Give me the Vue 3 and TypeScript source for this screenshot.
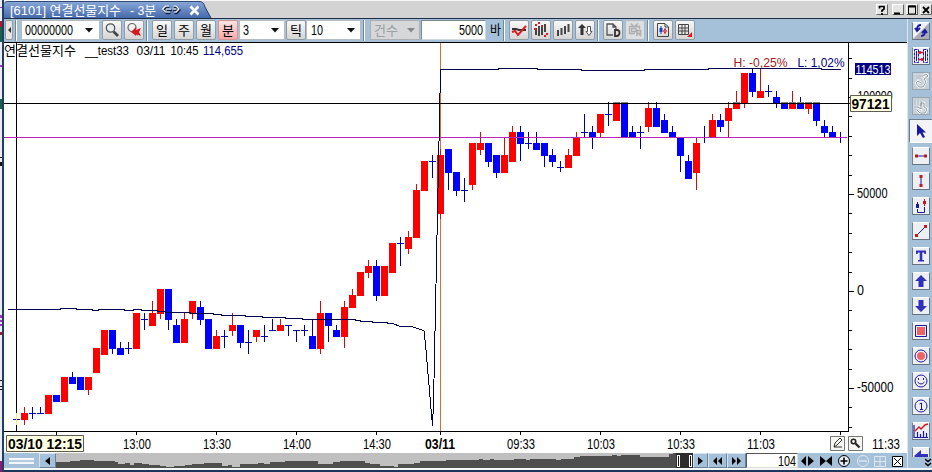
<script setup lang="ts">
import { h, type FunctionalComponent } from 'vue'

type Kind = 'r' | 'b' | 'c'
// kind, high, body top, body bottom, low; the first candle sits at x = 16
type Candle = [Kind, number, number, number, number]

const candles: Candle[] = [
  ['c', 413, 419, 419, 425], ['r', 407, 413, 420, 425], ['c', 407, 413, 413, 419], ['c', 407, 413, 413, 414],
  ['r', 395, 395, 414, 414], ['b', 395, 395, 402, 402], ['r', 377, 377, 402, 402], ['b', 372, 377, 384, 384],
  ['b', 377, 377, 390, 390], ['r', 377, 377, 390, 395], ['r', 348, 348, 373, 373], ['r', 330, 330, 355, 355],
  ['b', 330, 330, 349, 354], ['b', 342, 348, 355, 355], ['c', 342, 348, 348, 354], ['r', 313, 313, 349, 349],
  ['c', 313, 319, 319, 330], ['r', 301, 313, 326, 326], ['r', 289, 289, 314, 319], ['b', 289, 289, 320, 330],
  ['b', 319, 325, 343, 343], ['r', 313, 319, 343, 343], ['r', 301, 301, 314, 319], ['b', 301, 307, 320, 325],
  ['b', 319, 319, 349, 349], ['r', 330, 336, 349, 349], ['c', 330, 336, 336, 348], ['r', 313, 325, 331, 336],
  ['b', 325, 325, 343, 348], ['c', 330, 342, 342, 354], ['r', 330, 330, 337, 342], ['c', 325, 336, 336, 342],
  ['c', 319, 330, 330, 331], ['r', 319, 325, 331, 331], ['c', 325, 325, 325, 336], ['c', 330, 330, 330, 342],
  ['c', 325, 330, 330, 336], ['b', 319, 336, 349, 349], ['r', 301, 313, 349, 354], ['b', 313, 313, 326, 342],
  ['b', 325, 330, 337, 337], ['r', 301, 307, 337, 348], ['r', 289, 295, 308, 308], ['r', 272, 272, 296, 296],
  ['r', 260, 266, 273, 278], ['b', 260, 266, 296, 301], ['r', 266, 266, 296, 296], ['r', 243, 243, 273, 273],
  ['c', 237, 243, 243, 266], ['r', 231, 237, 249, 254], ['r', 184, 190, 238, 238], ['r', 161, 161, 191, 191],
  ['c', 155, 161, 161, 178], ['r', 149, 155, 214, 219], ['b', 149, 149, 173, 190], ['b', 172, 172, 191, 196],
  ['c', 178, 190, 190, 202], ['r', 143, 143, 185, 190], ['r', 132, 143, 150, 155], ['b', 143, 143, 162, 167],
  ['b', 155, 155, 173, 178], ['r', 138, 155, 173, 173], ['r', 126, 132, 162, 162], ['b', 126, 132, 144, 161],
  ['c', 132, 143, 143, 149], ['b', 132, 143, 150, 150], ['b', 143, 143, 156, 167], ['b', 149, 155, 162, 167],
  ['c', 161, 167, 167, 172], ['r', 149, 155, 168, 168], ['r', 132, 138, 156, 156], ['c', 114, 132, 132, 137],
  ['b', 126, 132, 138, 149], ['r', 114, 114, 133, 137], ['c', 102, 114, 114, 126], ['r', 102, 102, 121, 121],
  ['b', 102, 102, 137, 137], ['b', 126, 132, 137, 137], ['c', 126, 132, 132, 149], ['r', 102, 108, 127, 132],
  ['b', 102, 108, 127, 127], ['b', 114, 120, 133, 133], ['b', 126, 132, 137, 137], ['b', 138, 138, 156, 172],
  ['b', 155, 161, 179, 179], ['r', 138, 143, 173, 190], ['c', 126, 137, 137, 143], ['r', 114, 120, 137, 137],
  ['b', 114, 120, 127, 132], ['r', 102, 108, 121, 137], ['r', 91, 102, 109, 109], ['r', 73, 73, 103, 108],
  ['b', 68, 73, 92, 97], ['r', 68, 91, 98, 98], ['c', 85, 91, 91, 97], ['b', 91, 97, 104, 108],
  ['b', 102, 102, 109, 109], ['r', 91, 102, 109, 109], ['b', 97, 102, 109, 109], ['r', 102, 102, 109, 114],
  ['b', 102, 102, 121, 126], ['b', 120, 126, 133, 137], ['b', 126, 132, 138, 138], ['c', 132, 137, 137, 143],
]
const cx = (i: number) => 16 + i * 8

const timeTicks = [56, 136, 216, 296, 376, 440, 520, 600, 680, 760, 840]
const timeLabels: [number, string][] = [
  [123, '13:00'], [203, '13:30'], [283, '14:00'], [363, '14:30'],
  [507, '09:33'], [587, '10:03'], [667, '10:33'], [747, '11:03'], [872, '11:33'],
]
const priceTicks = [58, 78, 116, 136, 155, 175, 213, 233, 252, 272, 310, 330, 349, 369, 407, 427]
const majorTicks = [97, 194, 291, 388]

const FONT = "'Liberation Sans','Noto Sans CJK KR',sans-serif"

interface LabelProps { text: string; w: number; size?: number; color?: string; bold?: boolean }
const Label: FunctionalComponent<LabelProps> = (p) =>
  h('svg', { width: p.w, height: 16, viewBox: `0 0 ${p.w} 16`, overflow: 'visible' }, [
    h('text', {
      x: 0, y: 13, textLength: p.w, lengthAdjust: 'spacingAndGlyphs', fill: p.color ?? '#000',
      'font-size': p.size ?? 14, 'font-weight': p.bold ? 700 : 400, 'font-family': FONT,
    }, p.text),
  ])
Label.props = ['text', 'w', 'size', 'color', 'bold']

const periods = ['일', '주', '월', '분']
const tools = ['refresh', 'link', 'hand', 'grab', 'pointer', 'hline', 'vline', 'candle', 'trend', 'text', 'up', 'down', 'rect', 'circle', 'smile', 'one', 'stats', 'back']
</script>

<template>
  <div class="screen">
    <svg class="edge" width="4" height="472">
      <path d="M0 0H2V472H0z" fill="#e9edf2" />
      <path d="M0 21H2V27H0z" fill="#a51a2c" /><path d="M0 27H2V42H0zM0 99H2V109H0z" fill="#176247" />
      <path d="M0 7H2V8H0zM0 65H2V67H0zM0 315H2V318H0zM0 320H2V322H0zM0 324H2V326H0z" fill="#a832c0" />
      <path d="M0 332H2V335H0z" fill="#9d1d2e" />
      <path d="M0 157H2V158H0zM0 162H2V166H0zM0 380H2V381H0zM0 386H2V387H0zM0 389H2V390H0z" fill="#111" />
      <path d="M0 461H2V472H0z" fill="#8a1c72" />
      <path d="M2 0H4V472H2z" fill="#1d3f68" />
    </svg>
    <div class="window">
      <header class="titlebar">
        <div class="tab">
          <Label text="[6101] 연결선물지수" :w="111" :size="13" color="#fff" />
          <Label class="tab-period" text="- 3분" :w="26" :size="13" color="#fff" />
          <svg class="chain" width="19" height="12" viewBox="0 0 19 12" fill="none">
            <path d="M7.500 3.500H4.500L1.500 6L4.500 9.500H8.500M5 6.500H10M12 3.500H15L18 6L15 9.500H12.500M11 6.500H15" stroke="#14223c" stroke-width="1.500" />
            <path d="M7 2H3.500L0.500 5L3.500 8H8M4 5H9M11.500 2H14L17 5L14 8H12M10.500 5H14" stroke="#f3f3ea" stroke-width="1.200" />
          </svg>
          <svg class="close" width="11" height="11" viewBox="0 0 11 11"><path d="M1.500 1.500L9.500 9.500M9.500 1.500L1.500 9.500" stroke="#fff" stroke-width="2.600" /></svg>
        </div>
        <svg class="tab-slope" width="13" height="17" viewBox="0 0 13 17">
          <defs><linearGradient id="slope" x2="0" y2="1"><stop stop-color="#86a6d8" /><stop offset="1" stop-color="#456aab" /></linearGradient></defs>
          <path d="M0 0C4 0 5 3 6 6L12 17H0z" fill="url(#slope)" /><path d="M0 .5C4 .5 5 3 6 6L12 17" fill="none" stroke="#243c62" />
        </svg>
        <div class="winbtns">
          <i class="help"><svg width="12" height="12"><path d="M3.500 4.500V2.500H8V5L6 6.500V8M6 9V11" fill="none" stroke="#000" stroke-width="1.700" /></svg></i>
          <i><svg width="12" height="12"><path d="M2 9.500H8" stroke="#000" stroke-width="2" /></svg></i>
          <i><svg width="12" height="12"><path d="M2.500 2H9.500V10H2.500z" fill="none" stroke="#000" /><path d="M2 2.500H10" stroke="#000" stroke-width="2" /></svg></i>
          <i><svg width="12" height="12"><path d="M3 3L9 9M9 3L3 9" stroke="#000" stroke-width="1.800" /></svg></i>
        </div>
      </header>

      <div class="body">
        <main class="main">
          <div class="toolbar">
            <button class="mini"><svg width="5" height="8"><path d="M4 1V7L1 4z" fill="#333" /></svg></button>
            <span class="sep first" />
            <div class="field code"><Label text="00000000" :w="48" /><svg class="arrow" width="8" height="5"><path d="M0 0H8L4 4.500z" fill="#111" /></svg></div>
            <button class="btn search">
              <svg width="18" height="18" viewBox="0 0 18 18"><path d="M10.500 10.500L15 15" stroke="#444" stroke-width="2.600" /><circle cx="7.500" cy="7" r="4.200" fill="#e9f0f2" stroke="#555" stroke-width="1.300" /></svg>
            </button>
            <button class="btn search2">
              <svg width="18" height="18" viewBox="0 0 18 18"><path d="M9.500 10L13 14" stroke="#666" stroke-width="2" /><circle cx="7" cy="6.500" r="4" fill="#eef2f3" stroke="#666" stroke-width="1.200" /><path d="M6 11L11 6V9L16 7L14 11L16 15L11 13V15z" fill="#df161f" /></svg>
            </button>
            <span class="sep s1" />
            <div class="periods">
              <button v-for="p in periods" :key="p" class="btn" :class="{ active: p === '분' }"><Label :text="p" :w="12" :size="13" /></button>
            </div>
            <div class="field num"><Label text="3" :w="6" /><svg class="arrow" width="8" height="5"><path d="M0 0H8L4 4.500z" fill="#111" /></svg></div>
            <button class="btn tick"><Label text="틱" :w="12" :size="13" /></button>
            <div class="field ten"><Label text="10" :w="12" /><svg class="arrow" width="8" height="5"><path d="M0 0H8L4 4.500z" fill="#111" /></svg></div>
            <span class="sep s2" />
            <div class="field count"><Label text="건수" :w="24" :size="13" color="#9b9ea2" /><svg class="arrow" width="8" height="5"><path d="M0 0H8L4 4.500z" fill="#85888c" /></svg></div>
            <div class="field bars"><Label text="5000" :w="24" /></div>
            <Label class="unit" text="바" :w="11" :size="13" />
            <span class="sep s3" />
            <div class="group">
              <button class="btn"><svg width="18" height="18"><path d="M2 8H6L9 9H16" fill="none" stroke="#333" stroke-width="2" /><path d="M2 11L5 10L8 14L16 5" fill="none" stroke="#dc1c24" stroke-width="2" /></svg></button>
              <button class="btn"><svg width="18" height="18"><path d="M4 7V14M7 5V15M10 6V14M13 3V11" stroke="#444" stroke-width="2" /><path d="M3 4H5M6 2H8M11 5H9M2 8H4M14 13H16M12 15H14" stroke="#df1b24" stroke-width="2" /></svg></button>
              <button class="btn"><svg width="18" height="18"><path d="M4 9V15M7.500 7V14M11 5V13M14.500 3V11" stroke="#444" stroke-width="2" /></svg></button>
              <button class="btn"><svg width="18" height="18"><path d="M2 7L6 3L10 7H7.500V14H4.500V7z" fill="#333" /><path d="M11.500 5.500H14.500V10.500H16L13 14.500L10 10.500H11.500z" fill="#fff" stroke="#555" /></svg></button>
            </div>
            <span class="sep s4" />
            <div class="group">
              <button class="btn"><svg width="18" height="18" fill="none" stroke="#555" stroke-width="1.300"><path d="M9 14H3V3H9L12 6V8M9 3V6H12" /><path d="M11 9H13Q15.500 9 15.500 11.800T13 15H11z" stroke="#333" stroke-width="1.800" /></svg></button>
              <button class="btn off"><svg width="18" height="18" fill="none" stroke="#adadad" stroke-width="1.300"><path d="M3.500 5.500H13.500V8M3.500 5.500V12.500H9M5.500 7.500H10V10.500H5.500zM7 5L5 2.500M9 5L12 2.500" /><path d="M11 15V9.500H14.500V12.500H11M13 12.500L15 15" stroke-width="1.600" /></svg></button>
            </div>
            <span class="sep s5" />
            <div class="group">
              <button class="btn"><svg width="18" height="18" fill="none"><path d="M3.500 2.500H11L14.500 6V15.500H3.500zM11 3V6H14" stroke="#444" /><path d="M7 5V13" stroke="#1644c0" /><path d="M5.500 7H8.500V11H5.500z" fill="#1644c0" /><path d="M11 7V13M9.500 10L11 8L12.500 10L11 12z" stroke="#dd202a" /></svg></button>
              <button class="btn"><svg width="18" height="18"><path d="M2.500 3.500H12.500V13.500H2.500zM2.500 7H12.500M2.500 10H12.500M6 3.500V13.500M9 3.500V13.500" fill="none" stroke="#444" /><path d="M16 11V16H11z" fill="#e5141f" /></svg></button>
            </div>
          </div>

          <svg class="chart" width="903" height="410" viewBox="4 43 903 410" :font-family="FONT">
            <path d="M4 43H907V453H4z" fill="#fff" />
            <g shape-rendering="crispEdges">
              <path d="M440 43H441V431H440z" fill="#cf7530" />
              <g v-for="(c, i) in candles" :key="i">
                <rect :x="cx(i)" :y="c[1]" width="1" :height="c[4] - c[1]" :fill="c[0] === 'r' ? '#c01414' : '#00009a'" />
                <rect v-if="c[0] === 'c'" :x="cx(i) - 3" :y="c[2]" width="7" height="1" fill="#0000b0" />
                <rect v-else :x="cx(i) - 3" :y="c[2]" width="7" :height="c[3] - c[2]" :fill="c[0] === 'r' ? '#fe0000' : '#0000fe'" />
                <rect v-if="c[2] === 102" :x="cx(i) - 3" y="102" width="7" height="1" fill="#858585" />
              </g>
              <path d="M16 43H17V431H16zM4 103H854V104H4zM848 43H849V432H848zM4 431H849V432H4z" fill="#000" />
              <path d="M16 413H17V425H16z" fill="#f6ee5e" />
              <rect x="4" y="137" width="843" height="1" fill="#bc22bc" />
              <rect v-for="t in timeTicks" :key="t" :x="t" y="432" width="1" height="3" />
              <rect v-for="t in priceTicks" :key="t" x="849" :y="t" width="3" height="1" />
              <rect v-for="t in majorTicks" :key="t" x="849" :y="t" width="5" height="1" />
              <path d="M8 309.500H60V308.500H76V309.500H92V310.500H98V309.500H124V310.500H133V309.500H141V310.500H157V311.500H165V312.500H190V313.500H213V314.500H221V315.500H245V316.500H262V317.500H285V318.500H302V319.500H355V320.500H360V321.500H372V322.500H387V323.500H393L400 326.500H411L424 330.500L426 350L432.500 426L433.500 403L436.500 260L440.500 70.500V69.500H498V68.500H537V69.500H581V70.500H644V69.500H708V68.500H821V69.500H841" fill="none" stroke="#00004e" />
            </g>
            <text x="4" y="55" font-size="13" textLength="72" lengthAdjust="spacingAndGlyphs">연결선물지수</text>
            <text x="85" y="54.500" font-size="13" textLength="44" lengthAdjust="spacingAndGlyphs">__test33</text>
            <text x="136.500" y="54.500" font-size="13" textLength="29" lengthAdjust="spacingAndGlyphs">03/11</text>
            <text x="170.500" y="54.500" font-size="13" textLength="28" lengthAdjust="spacingAndGlyphs">10:45</text>
            <text x="203" y="54.500" font-size="13" textLength="40" lengthAdjust="spacingAndGlyphs" fill="#000080">114,655</text>
            <text x="733.500" y="67" font-size="13" textLength="54" lengthAdjust="spacingAndGlyphs" fill="#a32020">H: -0,25%</text>
            <text x="797.500" y="67" font-size="13" textLength="47" lengthAdjust="spacingAndGlyphs" fill="#000080">L: 1,02%</text>
            <path d="M855 63H891V75H855z" fill="#000080" />
            <text x="855.500" y="74" font-size="13.500" textLength="35" lengthAdjust="spacingAndGlyphs" fill="#fff">114513</text>
            <g font-size="14">
              <text x="857.500" y="101" textLength="35" lengthAdjust="spacingAndGlyphs">100000</text>
              <text x="857" y="198" textLength="30.500" lengthAdjust="spacingAndGlyphs">50000</text>
              <text x="857" y="295" textLength="7" lengthAdjust="spacingAndGlyphs">0</text>
              <text x="857" y="392" textLength="36.500" lengthAdjust="spacingAndGlyphs">-50000</text>
              <text v-for="t in timeLabels" :key="t[1]" :x="t[0]" y="449" textLength="28" lengthAdjust="spacingAndGlyphs">{{ t[1] }}</text>
              <text x="425" y="449" font-weight="700" textLength="30" lengthAdjust="spacingAndGlyphs">03/11</text>
            </g>
            <g fill="#ffffe4" stroke="#5d5d50">
              <path d="M850.500 95.500H891.500V111.500H850.500z" /><path d="M6.500 435.500H83.500V451.500H6.500z" />
            </g>
            <text x="851.500" y="109" font-size="14" font-weight="700" textLength="38" lengthAdjust="spacingAndGlyphs">97121</text>
            <text x="8" y="449" font-size="14" font-weight="700" textLength="74" lengthAdjust="spacingAndGlyphs">03/10 12:15</text>
            <g fill="#f6f6f2" stroke="#777"><path d="M830.500 436.500H844.500V450.500H830.500zM848.500 436.500H862.500V450.500H848.500z" /></g>
            <path d="M834 447L835 443L840 438L842 440L837 445L834 447H842" fill="none" stroke="#333" />
            <circle cx="853.500" cy="441.500" r="2.200" fill="none" stroke="#222" stroke-width="1.600" /><path d="M855.500 443.500L859.500 447.500" stroke="#222" stroke-width="2.200" />
          </svg>

          <footer class="nav">
            <div class="grip"><i /></div>
            <button class="navbtn prev"><svg width="6" height="8"><path d="M5 0V8L0 4z" /></svg></button>
            <svg class="minimap" width="637" height="15" viewBox="56 453 637 15" shape-rendering="crispEdges">
              <path d="M56 453H693V468H56z" fill="#c0c0c0" />
              <path d="M56 468V462H70V461H80V460H94V461H115V462H118V464H125V463H130V465H134V463H142V464H149V465H160V466H166V467H174V466H185V465H192V464H204V463H222V466H228V465H232V467H240V464H258V463H264V464H270V462H285V461H318V464H333V462H340V461H365V463H370V464H380V466H394V467H398V464H414V463H420V461H446V460H479V459H483V460H490V459H494V460H514V459H526V460H530V459H556V460H561V459H574V457H580V456H612V455H617V456H621V455H640V457H669V454H673V453H676V468z" fill="#4f4f4f" />
              <path d="M676 453H693V468H676z" fill="#2d2d2d" />
              <path d="M677.500 455.500H679.500V466.500H677.500zM689.500 455.500H691.500V466.500H689.500z" fill="#111" stroke="#fff" />
            </svg>
            <button class="navbtn next"><svg width="6" height="8"><path d="M0 0V8L5 4z" /></svg></button>
            <button class="navbtn wide"><svg width="10" height="8"><path d="M4 0V8L0 4zM9 0V8L5 4z" /></svg></button>
            <button class="navbtn wide"><svg width="10" height="8"><path d="M0 0V8L4 4zM5 0V8L9 4z" /></svg></button>
            <div class="total"><Label text="104" :w="18" /></div>
            <svg class="navicons" width="109" height="15" viewBox="798 453 109 15">
              <path d="M806 456V466L801 461zM808 456V466L814 461zM820 456L826 461L820 466zM832 456L826 461L832 466z" />
              <g fill="none" stroke="#000"><circle cx="844" cy="461" r="5.500" fill="#e5eef5" /><path d="M840.500 461H847.500M844 457.500V464.500" stroke-width="1.600" /></g>
              <g fill="none" stroke="#dce7ef"><circle cx="863" cy="461" r="5.500" /><path d="M859 461H867" stroke-width="1.500" /><path d="M874.500 456.500H885.500V466.500H874.500zM880 456V467M874 461.500H886" /></g>
              <path d="M892.500 456.500H902.500V466.500H892.500z" fill="#fff" stroke="#000" /><path d="M894 458L901 465M901 458L894 465" stroke="#000" />
            </svg>
          </footer>
        </main>

        <aside class="side">
          <div v-for="t in tools" :key="t" class="tool" :class="t">
            <svg width="16" height="16" viewBox="0 0 16 16" fill="none" stroke="#1919a5">
              <template v-if="t === 'refresh'"><path d="M0 16V0H16z" fill="#eef2f6" stroke="none" /><path d="M0 16L16 0V16z" fill="#a9adb3" stroke="none" /><path d="M8 2C5 2 4 4 4 7M2 5L4 8L7 5M8 13C11 13 12 11 12 8M9 10L12 7L14 10" stroke-width="1.800" /></template>
              <template v-else-if="t === 'link'"><path d="M1.500 1.500H5.500V14.500H1.500zM10.500 1.500H14.500V14.500H10.500z" stroke-dasharray="3 1" /><path d="M3.500 3V13M12.500 3V13" /><path d="M5 4.500H11M5 11.500H11M7 3V6M9 10V13" stroke="#c0182c" stroke-width="1.600" /></template>
              <template v-else-if="t === 'hand'"><path d="M1 3H10L13 1L15 3L11 6L13 9L10 14H6L3 10L5 8L8 10M3 5H8" stroke="#fff" stroke-width="2.400" /><path d="M1 3H10L13 1L15 3L11 6L13 9L10 14H6L3 10L5 8L8 10M3 5H8" stroke="#87929e" /></template>
              <template v-else-if="t === 'grab'"><path d="M2 2V7M5 2V7M8 3V8M1 9H5L8 11V5H11V9L14 11L12 15H7L4 12" stroke="#fff" stroke-width="2.400" /><path d="M2 2V7M5 2V7M8 3V8M1 9H5L8 11V5H11V9L14 11L12 15H7L4 12" stroke="#87929e" /></template>
              <path v-else-if="t === 'pointer'" d="M4 1V13L7 10L10 15L12 14L9.500 9.500H13z" fill="#1717a8" stroke="none" />
              <template v-else-if="t === 'hline'"><path d="M3 8H13" /><path d="M2 6.500H5V9.500H2zM11 6.500H14V9.500H11z" fill="#c01820" stroke="none" /></template>
              <template v-else-if="t === 'vline'"><path d="M8 3V13" /><path d="M6.500 2H9.500V5H6.500zM6.500 11H9.500V14H6.500z" fill="#c01820" stroke="none" /></template>
              <template v-else-if="t === 'candle'"><path d="M4.500 4V10M4.500 11V14.500H11.500V9" /><path d="M3 6H6V10H3z" fill="#1919a5" stroke="none" /><path d="M11.500 1V8" stroke="#c01820" /><path d="M10 3H13V6H10z" fill="#c01820" stroke="none" /></template>
              <template v-else-if="t === 'trend'"><path d="M3 13L13 3" /><path d="M2 11H5V14H2zM11 2H14V5H11z" fill="#c01820" stroke="none" /></template>
              <path v-else-if="t === 'text'" d="M3 2.500H13V6H11.500L11 4.500H9.300V12H11V13.500H5V12H6.700V4.500H5L4.500 6H3z" fill="#3030b8" stroke="none" />
              <path v-else-if="t === 'up'" d="M8 2L14 8H10.500V14H5.500V8H2z" fill="#3030b8" stroke="none" />
              <path v-else-if="t === 'down'" d="M8 14L14 8H10.500V2H5.500V8H2z" fill="#3030b8" stroke="none" />
              <template v-else-if="t === 'rect'"><path d="M2.500 2.500H13.500V13.500H2.500z" /><path d="M4 4H12V12H4z" fill="#ee6464" stroke="none" /></template>
              <template v-else-if="t === 'circle'"><circle cx="8" cy="8" r="6" /><circle cx="8" cy="8" r="4" fill="#ee6464" stroke="none" /></template>
              <template v-else-if="t === 'smile'"><circle cx="8" cy="8" r="6" /><path d="M5.500 5V7M10.500 5V7M4.500 9Q8 13 11.500 9" /></template>
              <template v-else-if="t === 'one'"><circle cx="8" cy="8" r="6" /><path d="M6.500 6L8.500 5V12M7 11.500H10" /></template>
              <template v-else-if="t === 'stats'"><path d="M1 15V2M1 14.500H15M4.500 9V14M7.500 11V14M10.500 8V14M13.500 10V14" stroke-width="1.200" /><path d="M2 8L6 4L8 6L12 2L15 1" stroke="#cc2020" stroke-width="1.500" /></template>
              <path v-else d="M8 2V6H15V12H8V14L1 8z" fill="#3030b8" stroke="none" />
            </svg>
          </div>
          <svg class="more" width="7" height="9"><path d="M0 1L3 3.500L6 1M0 5L3 7.500L6 5" fill="none" stroke="#000" stroke-width="1.500" /></svg>
        </aside>
      </div>
      <div class="bottom" />
    </div>
  </div>
</template>

<style>
body { overflow: hidden; }
</style>

<style scoped>
.screen { display: flex; width: 932px; height: 472px; background: #fff; font-family: "Liberation Sans", "Noto Sans CJK KR", sans-serif; }
.screen * { box-sizing: border-box; }
svg { display: block; flex: none; }
.window { display: flex; flex-direction: column; width: 928px; height: 472px; }
.titlebar { display: flex; height: 19px; background: #d3d3d3; border-top: 1px solid #f6f6f6; border-bottom: 1px solid #1c2d45; }
.tab { display: flex; align-items: center; width: 195px; height: 17px; padding-left: 6px; background: linear-gradient(#86a6d8, #456aab); border-top: 1px solid #304a74; border-radius: 4px 0 0 0; }
.tab-period { margin-left: 9px; }
.chain { margin-left: 6px; }
.close { margin-left: 8px; }
.winbtns { display: flex; margin-left: auto; padding-top: 3px; gap: 2px; }
.winbtns i { display: block; width: 12px; height: 11px; background: #e5e5e3; border: 1px solid; border-color: #fff #666 #666 #fff; }
.winbtns i svg { margin: -1px; }
.winbtns .help { margin-right: 2px; }
.body { display: flex; height: 449px; }
.main { width: 903px; height: 449px; }
.toolbar { display: flex; align-items: flex-start; width: 903px; height: 24px; padding: 1px 0 0 1px; background: #a5c0d9; border-bottom: 1px solid #000; }
button { display: flex; flex: none; align-items: center; justify-content: center; margin: 0; padding: 0; }
.mini { width: 8px; height: 20px; background: #e6e6e6; border: 1px solid #999; border-radius: 2px; }
.btn { width: 20px; height: 20px; background: linear-gradient(#f8f8f8, #d5d5d5); border: 1px solid #929ca5; border-radius: 2px; }
.btn.active { background: linear-gradient(#ffe4e2, #f3aaa9); border-color: #d99394; }
.btn.off { background: #dcdfe1; border-color: #b3bbc2; }
.sep { flex: none; width: 2px; height: 21px; background: #fff; border-left: 1px solid #72879a; }
.first { margin-left: 2px; }
.field { display: flex; flex: none; align-items: center; justify-content: space-between; height: 20px; background: #fff; border: 1px solid #b6bdc2; }
.code { width: 79px; margin-left: 4px; padding: 0 6px 0 3px; }
.search { margin-left: 2px; }
.search2 { margin-left: 2px; }
.s1 { margin-left: 2px; }
.periods { display: flex; gap: 2px; margin-left: 4px; }
.num { width: 46px; margin-left: 1px; padding: 0 5px 0 3px; }
.tick { margin-left: 1px; }
.ten { width: 55px; padding: 0 5px 0 4px; }
.s2 { margin-left: 2px; }
.count { width: 50px; margin-left: 5px; padding: 0 4px 0 3px; background: #d5d7d9; border-color: #acb0b3; }
.bars { justify-content: flex-end; width: 65px; margin-left: 1px; padding-right: 2px; border-color: #7c8891 #d1d7dc #d1d7dc #7c8891; }
.unit { margin: 1px 0 0 4px; }
.s3 { margin-left: 2px; }
.group { display: flex; gap: 2px; margin-left: 4px; }
.s4, .s5 { margin-left: 2px; }
.nav { display: flex; width: 903px; height: 15px; background: #a5c0d9; }
.grip { display: flex; align-items: center; justify-content: center; width: 35px; }
.grip i { width: 25px; height: 6px; background: #b4cbdf; border-top: 2px solid #f4f8fb; border-bottom: 2px solid #f4f8fb; }
.navbtn { width: 15px; height: 15px; background: #a5c0d9; border: 1px solid; border-color: #d6e3ee #6b8195 #6b8195 #d6e3ee; }
.prev { width: 17px; }
.wide { width: 19px; }
.total { display: flex; justify-content: flex-end; align-items: center; width: 52px; height: 15px; padding-right: 1px; background: #fff; border: 1px solid; border-color: #555 #ddd #ddd #555; }
.side { display: flex; flex-direction: column; gap: 7px; width: 25px; height: 451px; padding: 3px 0 0 4px; background: #a5c0d9; border-left: 1px solid #dce7f0; overflow: hidden; }
.tool { display: flex; flex: none; align-items: center; justify-content: center; width: 18px; height: 18px; background: #eeeff2; border: 1px solid; border-color: #fff #68727c #68727c #777f88; }
.hand, .grab { background: #c6d0d9; border-color: #98a3ad; }
.pointer { width: 24px; height: 24px; margin: -3px 0 -3px -3px; background: #f2f4f7; border-color: #6f7d8b #fff #fff #6f7d8b; }
.back { height: 10px; align-items: flex-start; overflow: hidden; border-bottom: 0; }
.more { margin: -6px 0 0 13px; }
.bottom { flex: none; height: 4px; background: #1b3658; border-top: 2px solid #f4f6f8; }
</style>
